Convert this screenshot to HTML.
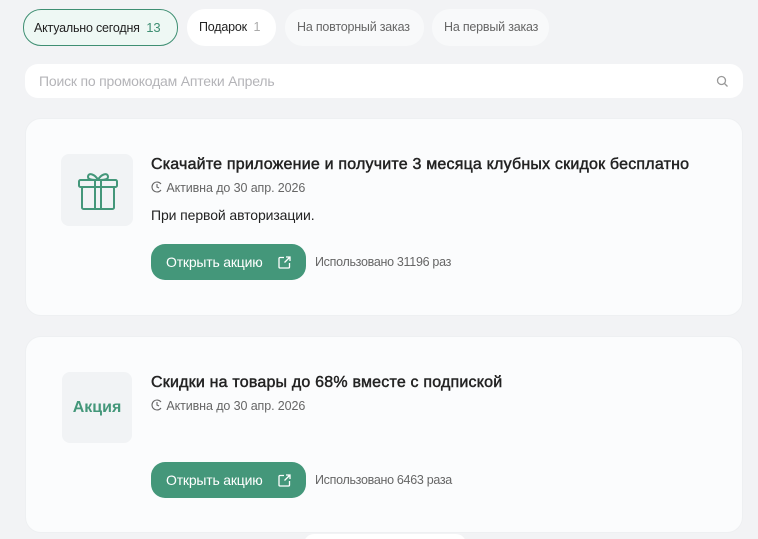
<!DOCTYPE html>
<html><head><meta charset="utf-8"><style>
*{box-sizing:border-box;margin:0;padding:0}
html,body{width:758px;height:539px;overflow:hidden}
body{background:#f2f3f5;font-family:"Liberation Sans",sans-serif;color:#222;position:relative}
.chip{position:absolute;top:9px;height:37px;border-radius:18px;background:#f8f9fa;font-size:12.5px;line-height:37px;padding:0 12px;color:#666;white-space:nowrap;letter-spacing:-0.2px}
.search{position:absolute;left:25px;top:64px;width:718px;height:34px;border-radius:13px;background:#fff;font-size:14px;color:#b4b4b8;line-height:34px;padding-left:14px;letter-spacing:-0.2px}
.card{position:absolute;left:25px;width:718px;background:#fbfcfd;border-radius:16px;border:1px solid #eef0f2}
.ib{position:absolute;width:72px;height:72px;background:#f1f3f5;border-radius:8px}
.t{position:absolute;left:151px;font-size:16px;color:#222;-webkit-text-stroke:0.45px #222;white-space:nowrap;letter-spacing:0.2px}
.d{position:absolute;left:151px;font-size:12.5px;color:#666;white-space:nowrap;letter-spacing:-0.1px}
.btn{position:absolute;left:151px;width:155px;height:36px;border-radius:14px;background:#44977a;color:#fff;font-size:14px;line-height:36px;padding-left:15px;white-space:nowrap;letter-spacing:-0.2px}
.u{position:absolute;left:315px;font-size:12.5px;color:#666;white-space:nowrap;letter-spacing:-0.3px}
</style></head><body>
<div class="chip" style="left:23px;width:155px;background:#eef8f4;border:1px solid #3f8f73;color:#222;line-height:35px;padding:0 10px">Актуально сегодня&nbsp; <span style="color:#3f8f73;font-size:13px">13</span></div>
<div class="chip" style="left:187px;width:89px;background:#fff;color:#222">Подарок&nbsp; <span style="color:#aaa">1</span></div>
<div class="chip" style="left:285px;width:139px">На повторный заказ</div>
<div class="chip" style="left:432px;width:117px">На первый заказ</div>
<div class="search">Поиск по промокодам Аптеки Апрель
<svg style="position:absolute;right:14px;top:11px" width="13" height="13" viewBox="0 0 13 13" fill="none" stroke="#999" stroke-width="1.3"><circle cx="5.5" cy="5.5" r="4"/><path d="M8.5 8.5l3 3"/></svg></div>

<div class="card" style="top:118px;height:198px"></div>
<div class="ib" style="left:61px;top:154px"><svg style="position:absolute;left:15px;top:14px" width="44" height="44" viewBox="0 0 44 44" fill="none" stroke="#44977a" stroke-width="2"><rect x="3" y="12" width="38" height="7" rx="1.5"/><rect x="6" y="19" width="32" height="22" rx="1.5"/><path d="M19 12v29M25 12v29M22 12c-3-6-10-8-10-3 0 3 6 3 10 3M22 12c3-6 10-8 10-3 0 3-6 3-10 3"/></svg></div>
<div class="t" style="top:156px">Скачайте приложение и получите 3 месяца клубных скидок бесплатно</div>
<div class="d" style="top:181px"><svg width="12" height="12" viewBox="0 0 12 12" fill="none" stroke="#666" stroke-width="1.1" style="vertical-align:-1px"><path d="M10 3A5 5 0 1 0 10 9"/><path d="M6 3v3l2 1"/></svg> Активна до 30 апр. 2026</div>
<div class="d" style="top:207px;font-size:14px;color:#222">При первой авторизации.</div>
<div class="btn" style="top:244px">Открыть акцию <svg width="13" height="13" viewBox="0 0 13 13" fill="none" stroke="#fff" stroke-width="1.3" style="position:absolute;right:15px;top:12px"><path d="M6 1.5H2a1 1 0 0 0-1 1v8.5a1 1 0 0 0 1 1h8.5a1 1 0 0 0 1-1V7M8 1h4v4M12 1L6.5 6.5"/></svg></div>
<div class="u" style="top:255px">Использовано 31196 раз</div>

<div class="card" style="top:336px;height:197px"></div>
<div class="ib" style="left:62px;top:372px;width:70px;height:71px;color:#44977a;font-weight:bold;font-size:16px;text-align:center;line-height:72px">Акция</div>
<div class="t" style="top:374px">Скидки на товары до 68% вместе с подпиской</div>
<div class="d" style="top:399px"><svg width="12" height="12" viewBox="0 0 12 12" fill="none" stroke="#666" stroke-width="1.1" style="vertical-align:-1px"><path d="M10 3A5 5 0 1 0 10 9"/><path d="M6 3v3l2 1"/></svg> Активна до 30 апр. 2026</div>
<div class="btn" style="top:462px">Открыть акцию <svg width="13" height="13" viewBox="0 0 13 13" fill="none" stroke="#fff" stroke-width="1.3" style="position:absolute;right:15px;top:12px"><path d="M6 1.5H2a1 1 0 0 0-1 1v8.5a1 1 0 0 0 1 1h8.5a1 1 0 0 0 1-1V7M8 1h4v4M12 1L6.5 6.5"/></svg></div>
<div class="u" style="top:473px">Использовано 6463 раза</div>
<div style="position:absolute;left:304px;top:534px;width:162px;height:10px;background:#fff;border-radius:10px 10px 0 0"></div>
</body></html>
